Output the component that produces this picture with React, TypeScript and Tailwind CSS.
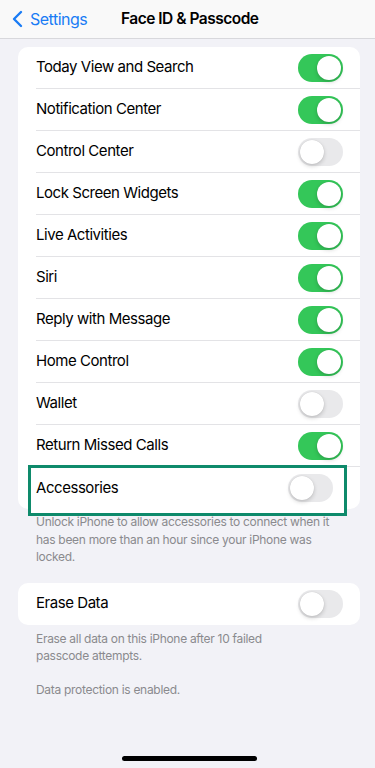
import React from "react";

type Row = { label: string; on: boolean };

const ROWS: Row[] = [
  { label: "Today View and Search", on: true },
  { label: "Notification Center", on: true },
  { label: "Control Center", on: false },
  { label: "Lock Screen Widgets", on: true },
  { label: "Live Activities", on: true },
  { label: "Siri", on: true },
  { label: "Reply with Message", on: true },
  { label: "Home Control", on: true },
  { label: "Wallet", on: false },
  { label: "Return Missed Calls", on: true },
];

function Toggle({ on }: { on: boolean }) {
  return (
    <div
      className={`relative w-[45px] h-[28px] rounded-full shrink-0 ${on ? "bg-[#34c759]" : "bg-[#e9e9eb]"}`}
    >
      <div
        className={`absolute top-[2px] w-[24px] h-[24px] rounded-full bg-white shadow-[0_2px_4px_rgba(0,0,0,0.18),0_0_1px_rgba(0,0,0,0.15)] ${on ? "right-[2px]" : "left-[2px]"}`}
      />
    </div>
  );
}

function SettingRow({ label, on, last }: { label: string; on: boolean; last?: boolean }) {
  return (
    <div className="pl-[18px]">
      <div
        className={`h-[42px] flex items-center justify-between pr-[17px] ${last ? "" : "border-b border-[#e3e3e6]"}`}
      >
        <span className="text-[15px] text-black tracking-[-0.45px]">{label}</span>
        <Toggle on={on} />
      </div>
    </div>
  );
}

export default function App() {
  return (
    <div className="w-[375px] h-[768px] bg-[#f2f2f7] font-['Inter',sans-serif] flex flex-col relative overflow-hidden">
      {/* nav bar */}
      <div className="h-[39px] bg-[#f9f9f9] border-b border-[#d8d8dc] flex items-center relative shrink-0">
        <div className="flex items-center pl-[11px] gap-[7px] text-[#1a7cf5]">
          <svg width="12" height="18" viewBox="0 0 12 18" fill="none">
            <path d="M10 2 L3 9 L10 16" stroke="#1a7cf5" strokeWidth="2.4" strokeLinecap="round" strokeLinejoin="round" />
          </svg>
          <span className="text-[16px] tracking-[-0.5px]">Settings</span>
        </div>
        <span className="absolute left-[121px] text-[15.5px] font-semibold text-black tracking-[-0.5px]">
          Face ID &amp; Passcode
        </span>
      </div>

      {/* first group */}
      <div className="ml-[18px] mr-[15px] mt-[8px] bg-white rounded-[10px]">
        {ROWS.map((r) => (
          <SettingRow key={r.label} label={r.label} on={r.on} />
        ))}
        <div className="relative pl-[18px]">
          {/* highlight annotation */}
          <div className="absolute left-[10px] top-[-2px] w-[319px] h-[51px] bg-white border-[3px] border-[#0e8a6b]" />
          <div className="relative h-[42px] flex items-center justify-between pr-[27px]">
            <span className="text-[15px] text-black tracking-[-0.45px]">Accessories</span>
            <Toggle on={false} />
          </div>
        </div>
      </div>

      <p className="px-[36px] pt-[4px] text-[12px] leading-[17.5px] tracking-[-0.3px] text-[#8a8a8e] whitespace-nowrap">
        Unlock iPhone to allow accessories to connect when it
        <br />
        has been more than an hour since your iPhone was
        <br />
        locked.
      </p>

      {/* second group */}
      <div className="ml-[18px] mr-[15px] mt-[17px] bg-white rounded-[10px]">
        <SettingRow label="Erase Data" on={false} last />
      </div>

      <div className="px-[36px] pt-[5px] text-[12px] leading-[17.5px] tracking-[-0.3px] text-[#8a8a8e] whitespace-nowrap">
        <p>
          Erase all data on this iPhone after 10 failed
          <br />
          passcode attempts.
        </p>
        <p className="mt-[16px]">Data protection is enabled.</p>
      </div>

      {/* home indicator */}
      <div className="absolute bottom-[7px] left-[122px] w-[135px] h-[5px] rounded-full bg-black" />
    </div>
  );
}
